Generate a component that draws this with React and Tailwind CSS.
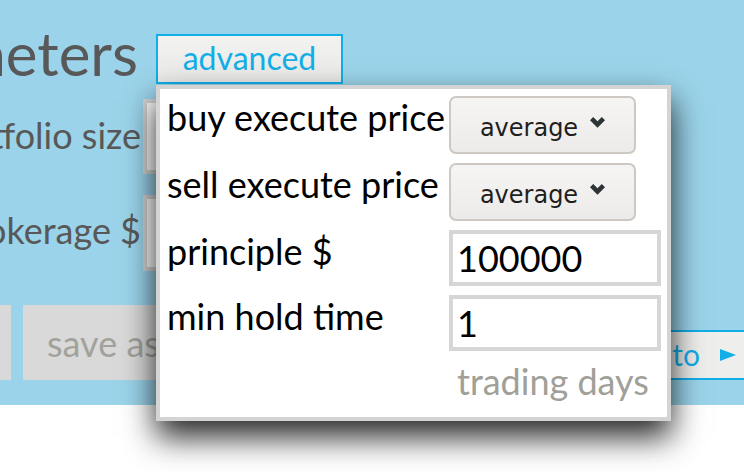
const rows = [
  { label: "buy execute price", kind: "select", value: "average" },
  { label: "sell execute price", kind: "select", value: "average" },
  { label: "principle $", kind: "input", value: "100000" },
  { label: "min hold time", kind: "input", value: "1" },
];

const Chevron = () => (
  <svg viewBox="0 0 15 11" className="mb-[5px] h-[11px] w-[15px] shrink-0">
    <polygon points="0,3.2 3.2,0 7.5,4.3 11.8,0 15,3.2 7.5,10.7" fill="#2e3436" />
  </svg>
);

const App = () => {
  return (
    <div className="relative h-[472px] w-[744px] overflow-hidden bg-white font-['Lato',sans-serif]">
      <div className="h-[405px] bg-[#9bd4ea] pt-[15px]">
        {/* heading */}
        <div className="flex items-start">
          <div className="mt-[2px] flex w-[138px] justify-end overflow-hidden">
            <span className="whitespace-nowrap text-[60px] leading-[72px] text-[#585858]">
              parameters
            </span>
          </div>
          <button className="ml-[18px] mt-[19px] flex h-[50px] w-[187px] items-center justify-center border-2 border-[#12aee8] bg-gradient-to-b from-[#f2f2f1] to-[#e9e9e8] text-[32px] leading-none text-[#12aee8]">
            <span className="mb-[2px]">advanced</span>
          </button>
        </div>

        {/* fields behind the popup */}
        <div className="mt-[10px] flex items-start">
          <div className="mt-[9px] flex w-[141px] justify-end overflow-hidden">
            <span className="whitespace-nowrap text-[36px] leading-normal text-[#585858]">portfolio size</span>
          </div>
          <div className="ml-[2px] h-[75px] w-[300px] border-4 border-[#d6d6d6] bg-white" />
        </div>
        <div className="mt-[21px] flex items-start">
          <div className="mt-[8px] flex w-[141px] justify-end overflow-hidden">
            <span className="whitespace-nowrap text-[36px] leading-normal text-[#585858]">brokerage $</span>
          </div>
          <div className="ml-[2px] h-[76px] w-[300px] border-4 border-[#d6d6d6] bg-white" />
        </div>

        {/* buttons */}
        <div className="mt-[34px] flex items-end">
          <div className="h-[75px] w-[11px] bg-[#d9d9d9]" />
          <div className="ml-[12px] flex h-[75px] w-[260px] items-center bg-[#d9d9d9] pl-[24px] text-[36px] text-[#a2a29b]">
            save as
          </div>
          <button className="-mr-[10px] ml-auto flex h-[50px] w-[180px] items-center justify-end gap-[20px] border-y-2 border-[#12aee8] bg-[#eeeeed] pr-[18px] text-[30px] text-[#12aee8]">
            <span className="mb-[2px]">go to</span>
            <svg width="16" height="14" viewBox="0 0 16 14">
              <polygon points="0,1 16,7 0,13" fill="#12aee8" />
            </svg>
          </button>
        </div>
      </div>

      {/* advanced popup */}
      <div className="absolute left-[156px] top-[85px] h-[336px] w-[515px] border-4 border-[#d4d4d4] bg-white px-[7px] pt-[7px] shadow-[0_16px_30px_rgba(0,0,0,0.85)]">
        <div className="grid grid-cols-[282px_212px] gap-y-[9px]">
          {rows.map((row) => (
            <div key={row.label} className="contents">
              <div className="whitespace-nowrap text-[36px] leading-[42px] text-black">{row.label}</div>
              {row.kind === "select" ? (
                <div className="flex h-[58px] w-[187px] items-center justify-center gap-[12px] rounded-[7px] border-2 border-[#cdc8c2] bg-gradient-to-b from-[#f6f5f4] to-[#edebe9] font-['DejaVu_Sans',sans-serif] text-[24px] text-[#1e1e1e]">
                  <span className="mt-[6px]">{row.value}</span>
                  <Chevron />
                </div>
              ) : (
                <div className="flex h-[56px] w-[212px] items-center border-4 border-[#d6d6d6] pl-[4px] text-[36px] leading-normal text-black">
                  {row.value}
                </div>
              )}
            </div>
          ))}
          <div />
          <div className="pl-[8px] text-[36px] leading-[42px] text-[#a0a098]">trading days</div>
        </div>
      </div>
    </div>
  );
};

export default App;
